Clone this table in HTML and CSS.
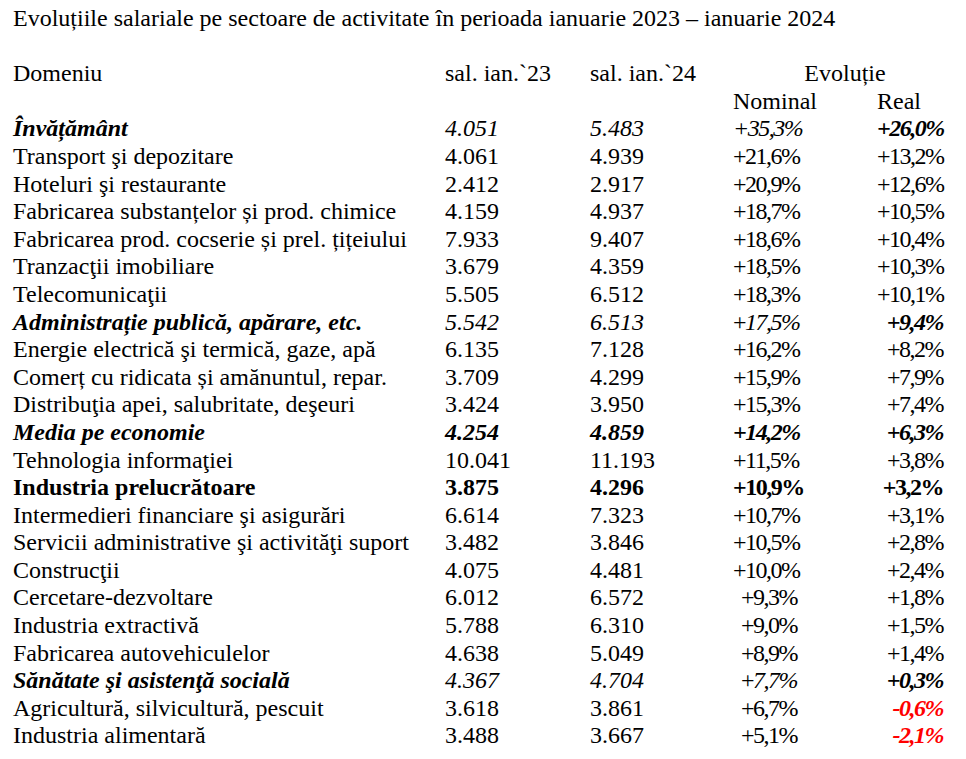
FILE: index.html
```html
<!DOCTYPE html>
<html>
<head>
<meta charset="utf-8">
<link rel="stylesheet" href="styles.css">
</head>
<body>
<div class="page">
  <div class="title">Evoluțiile salariale pe sectoare de activitate în perioada ianuarie 2023 – ianuarie 2024</div>
  <div class="blank"></div>
  <div class="row head">
    <div>Domeniu</div><div>sal. ian.`23</div><div>sal. ian.`24</div><div class="evo">Evoluție</div>
  </div>
  <div class="row sub">
    <div></div><div></div><div></div><div class="nomh">Nominal</div><div class="realh">Real</div>
  </div>
  <div class="row"><div class="bi">Învățământ</div><div class="i">4.051</div><div class="i">5.483</div><div class="nom i">+35,3%</div><div class="real bi">+26,0%</div></div>
  <div class="row"><div>Transport şi depozitare</div><div>4.061</div><div>4.939</div><div class="nom">+21,6%</div><div class="real">+13,2%</div></div>
  <div class="row"><div>Hoteluri şi restaurante</div><div>2.412</div><div>2.917</div><div class="nom">+20,9%</div><div class="real">+12,6%</div></div>
  <div class="row"><div>Fabricarea substanțelor și prod. chimice</div><div>4.159</div><div>4.937</div><div class="nom">+18,7%</div><div class="real">+10,5%</div></div>
  <div class="row"><div>Fabricarea prod. cocserie și prel. țițeiului</div><div>7.933</div><div>9.407</div><div class="nom">+18,6%</div><div class="real">+10,4%</div></div>
  <div class="row"><div>Tranzacţii imobiliare</div><div>3.679</div><div>4.359</div><div class="nom">+18,5%</div><div class="real">+10,3%</div></div>
  <div class="row"><div>Telecomunicaţii</div><div>5.505</div><div>6.512</div><div class="nom">+18,3%</div><div class="real">+10,1%</div></div>
  <div class="row"><div class="bi">Administrație publică, apărare, etc.</div><div class="i">5.542</div><div class="i">6.513</div><div class="nom">+<span class="i">17,5%</span></div><div class="real bi">+9,4%</div></div>
  <div class="row"><div>Energie electrică şi termică, gaze, apă</div><div>6.135</div><div>7.128</div><div class="nom">+16,2%</div><div class="real">+8,2%</div></div>
  <div class="row"><div>Comerț cu ridicata și amănuntul, repar.</div><div>3.709</div><div>4.299</div><div class="nom">+15,9%</div><div class="real">+7,9%</div></div>
  <div class="row"><div>Distribuţia apei, salubritate, deşeuri</div><div>3.424</div><div>3.950</div><div class="nom">+15,3%</div><div class="real">+7,4%</div></div>
  <div class="row bi"><div>Media pe economie</div><div>4.254</div><div>4.859</div><div class="nom">+14,2%</div><div class="real">+6,3%</div></div>
  <div class="row"><div>Tehnologia informaţiei</div><div>10.041</div><div>11.193</div><div class="nom">+11,5%</div><div class="real">+3,8%</div></div>
  <div class="row b"><div>Industria prelucrătoare</div><div>3.875</div><div>4.296</div><div class="nom">+10,9%</div><div class="real">+3,2%</div></div>
  <div class="row"><div>Intermedieri financiare şi asigurări</div><div>6.614</div><div>7.323</div><div class="nom">+10,7%</div><div class="real">+3,1%</div></div>
  <div class="row"><div>Servicii administrative şi activităţi suport</div><div>3.482</div><div>3.846</div><div class="nom">+10,5%</div><div class="real">+2,8%</div></div>
  <div class="row"><div>Construcţii</div><div>4.075</div><div>4.481</div><div class="nom">+10,0%</div><div class="real">+2,4%</div></div>
  <div class="row"><div>Cercetare-dezvoltare</div><div>6.012</div><div>6.572</div><div class="nom">+9,3%</div><div class="real">+1,8%</div></div>
  <div class="row"><div>Industria extractivă</div><div>5.788</div><div>6.310</div><div class="nom">+9,0%</div><div class="real">+1,5%</div></div>
  <div class="row"><div>Fabricarea autovehiculelor</div><div>4.638</div><div>5.049</div><div class="nom">+8,9%</div><div class="real">+1,4%</div></div>
  <div class="row"><div class="bi">Sănătate şi asistenţă socială</div><div class="i">4.367</div><div class="i">4.704</div><div class="nom">+<span class="i">7,7%</span></div><div class="real bi">+0,3%</div></div>
  <div class="row"><div>Agricultură, silvicultură, pescuit</div><div>3.618</div><div>3.861</div><div class="nom">+6,7%</div><div class="real bi neg">-0,6%</div></div>
  <div class="row"><div>Industria alimentară</div><div>3.488</div><div>3.667</div><div class="nom">+5,1%</div><div class="real bi neg">-2,1%</div></div>
</div>
</body>
</html>
```
FILE: styles.css
```css
body {
  margin: 0;
  background: #ffffff;
  font-family: "Liberation Serif", Tinos, "Times New Roman", serif;
}
.page {
  font-family: "Liberation Serif", Tinos, "Times New Roman", serif;
  font-size: 24px;
  line-height: 27.6px;
  color: #000000;
  padding: 5px 0 0 13px;
}
.title {
  white-space: nowrap;
}
.blank {
  height: 27.6px;
}
.row {
  display: grid;
  grid-template-columns: 432px 145px 143px 144px 66px;
  white-space: nowrap;
}
.evo {
  grid-column: 4 / span 2;
  text-align: center;
  padding-left: 14px;
}
.nom {
  text-align: right;
  padding-right: 80px;
  letter-spacing: -1.5px;
}
.real {
  text-align: right;
  letter-spacing: -1.5px;
}
.i {
  font-style: italic;
}
.b {
  font-weight: bold;
}
.bi {
  font-weight: bold;
  font-style: italic;
}
.neg {
  color: #ff0000;
}
```
